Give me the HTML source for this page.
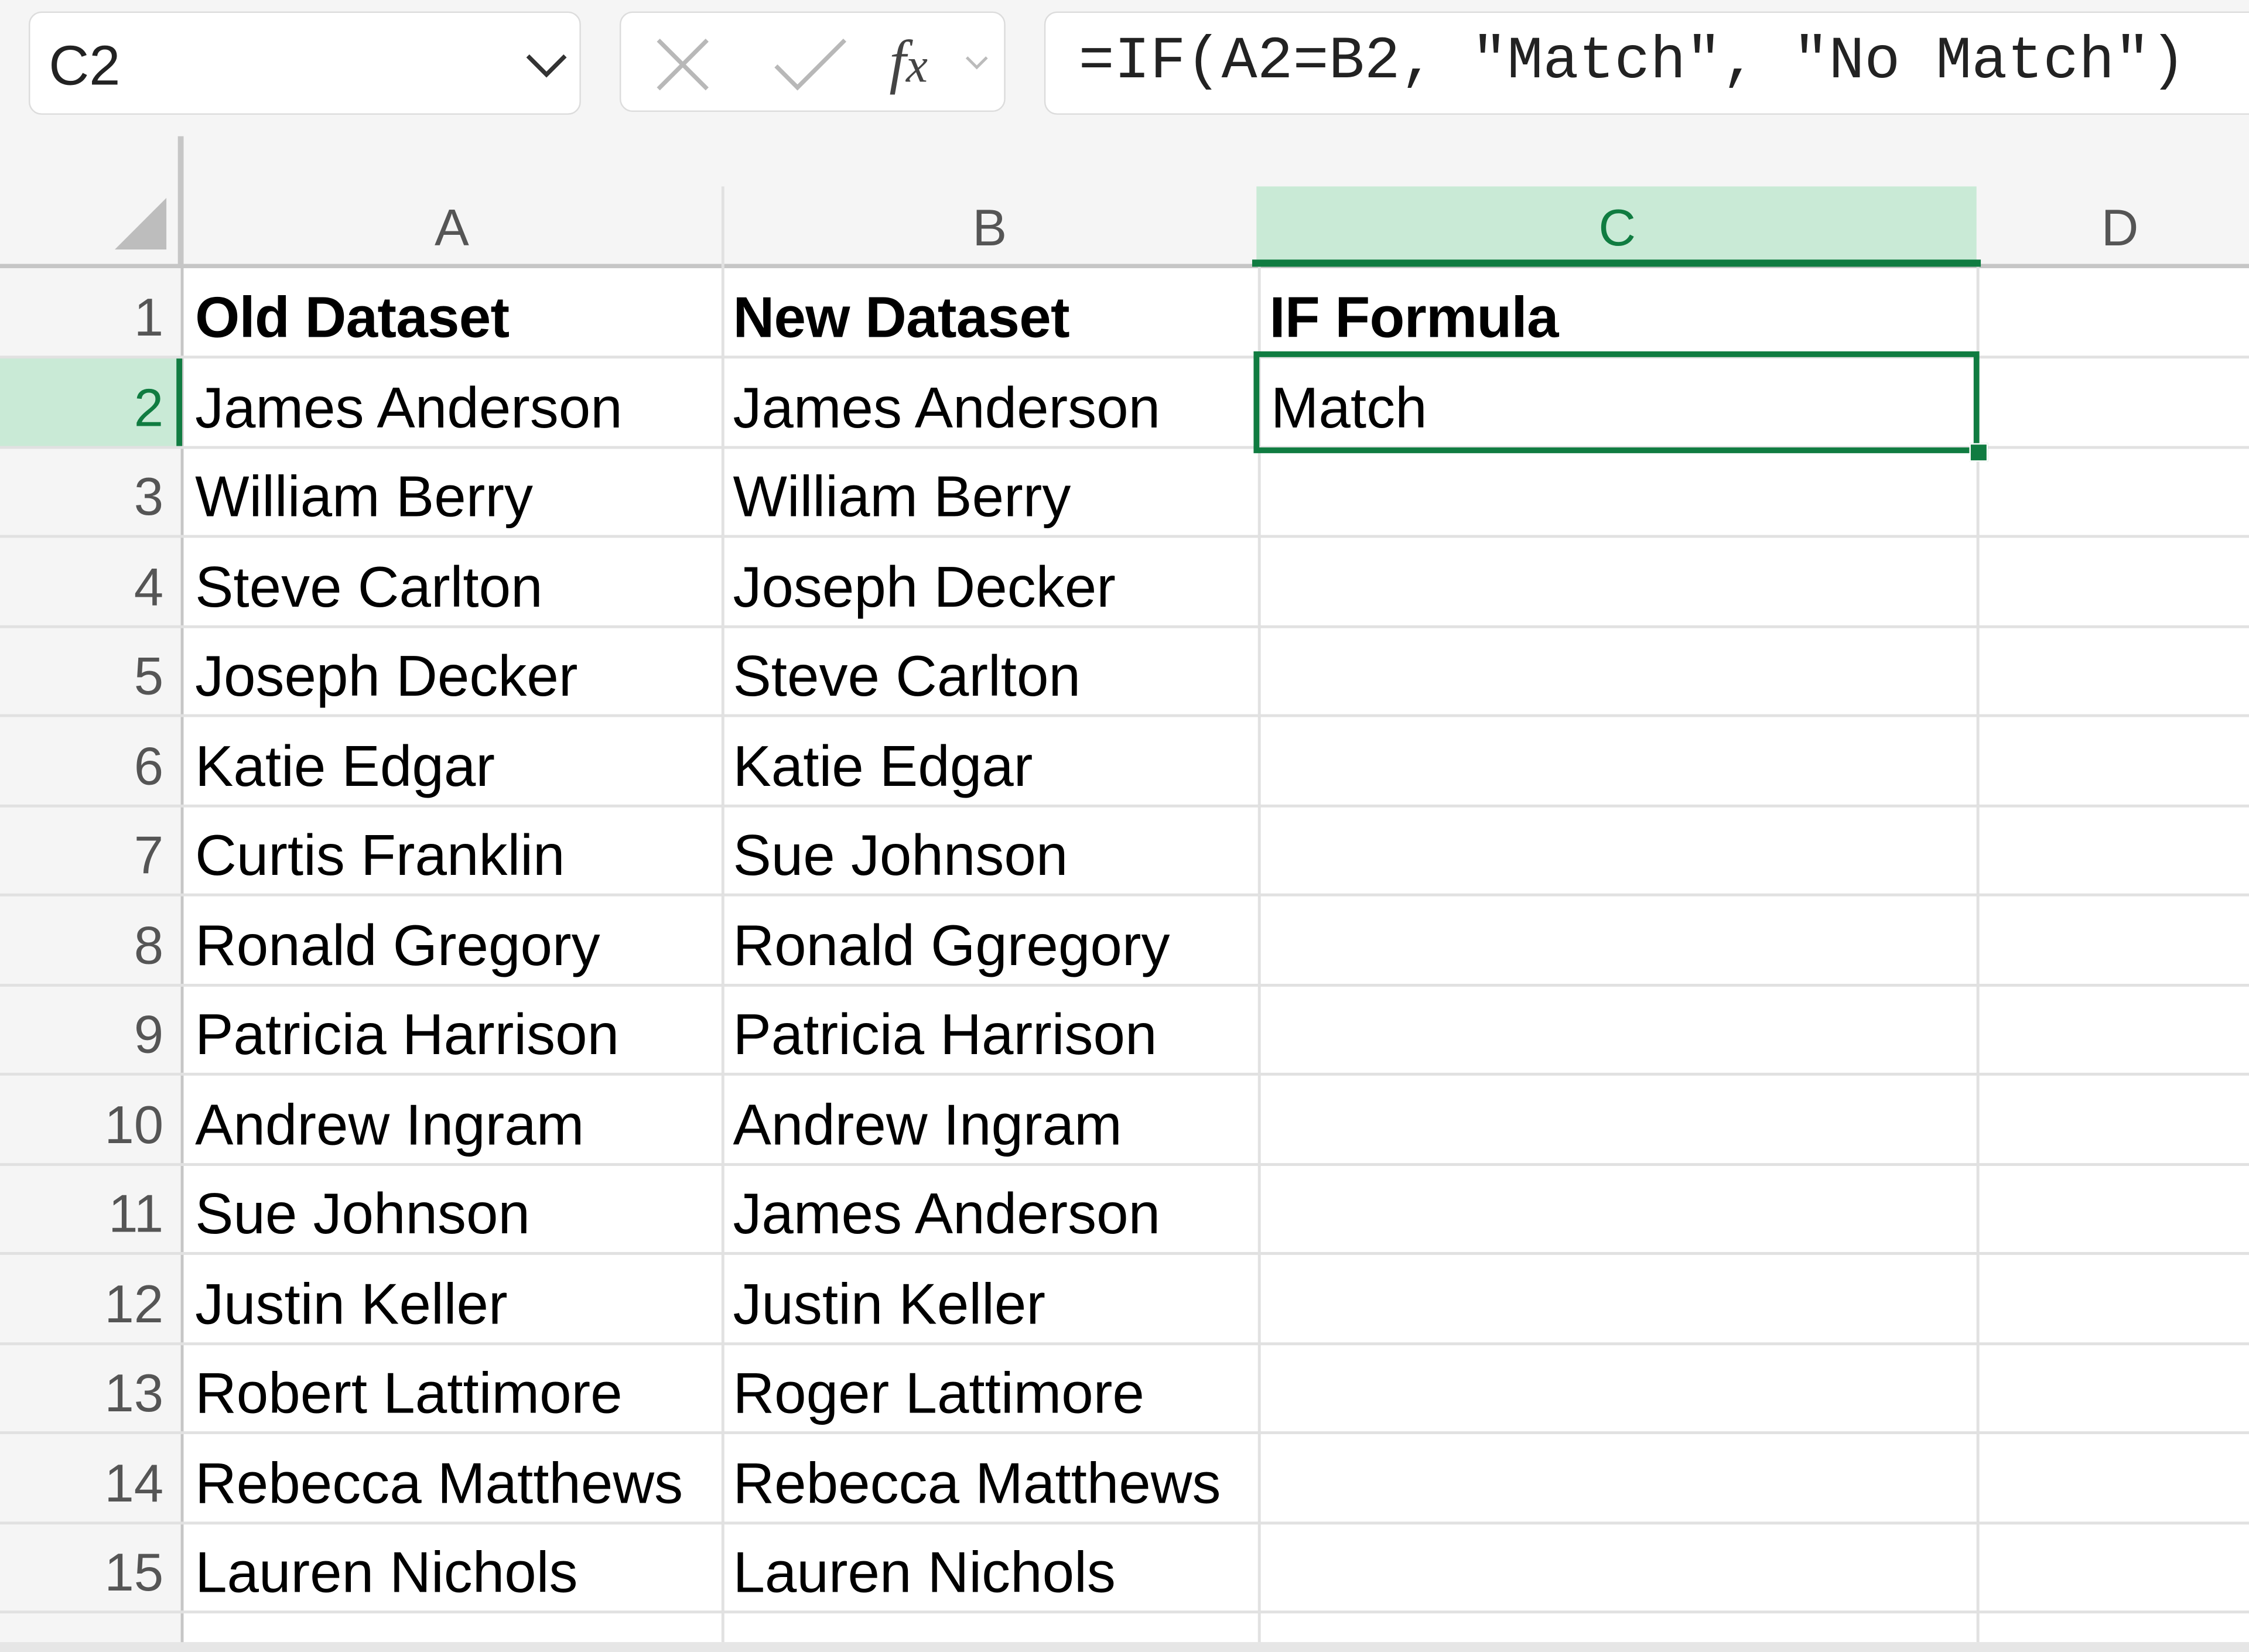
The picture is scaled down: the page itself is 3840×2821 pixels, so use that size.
<!DOCTYPE html>
<html><head><meta charset="utf-8"><style>
html,body{margin:0;padding:0;width:3840px;height:2820px;overflow:hidden;background:#f5f5f5}
#w{position:absolute;left:0;top:0;width:1568px;height:1152px;transform:scale(2.449);transform-origin:0 0;font-family:"Liberation Sans",sans-serif;background:#f5f5f5}
.a{position:absolute}
.box{position:absolute;background:#fff;border:1.5px solid #dcdcdc;border-radius:9px;box-sizing:border-box}
.cell{position:absolute;font-size:40px;color:#000;line-height:62px;white-space:nowrap}
.rn{position:absolute;left:0;width:114px;text-align:right;font-size:37px;color:#555;line-height:62px}
.hl{position:absolute;left:0;width:1568px;height:2px;background:#e1e1e1}
.vl{position:absolute;top:186px;width:1.5px;height:960px;background:#e1e1e1}
.ch{position:absolute;top:130px;height:56px;line-height:58px;text-align:center;font-size:36px;color:#555}
</style></head><body><div id="w">
<div class="box" style="left:20px;top:8px;width:385px;height:72px"></div>
<div class="a" style="left:34px;top:25px;font-size:39px;color:#222">C2</div>
<svg class="a" style="left:365px;top:36px" width="32" height="20"><path d="M3 3 L16 16 L29 3" fill="none" stroke="#333" stroke-width="3"/></svg>
<div class="box" style="left:432px;top:8px;width:269px;height:70px"></div>
<svg class="a" style="left:455px;top:24px" width="44" height="42"><path d="M4 4 L38 38 M38 4 L4 38" stroke="#b8b8b8" stroke-width="3" fill="none"/></svg>
<svg class="a" style="left:538px;top:24px" width="54" height="42"><path d="M3 22 L18 37 L51 4" stroke="#b8b8b8" stroke-width="3" fill="none"/></svg>
<div class="a" style="left:620px;top:20px;font-family:'Liberation Serif',serif;font-style:italic;font-size:42px;color:#444">f<span style="font-size:34px">x</span></div>
<svg class="a" style="left:672px;top:38px" width="18" height="12"><path d="M2 2 L9 9 L16 2" fill="none" stroke="#bbb" stroke-width="2"/></svg>
<div class="box" style="left:728px;top:8px;width:860px;height:72px"></div>
<div class="a" style="left:752px;top:20px;font-family:'Liberation Mono',monospace;font-size:41.5px;color:#222;white-space:pre">=IF(A2=B2, "Match", "No Match")</div>
<div class="a" style="left:127px;top:186px;width:1441px;height:960px;background:#fff"></div>
<div class="a" style="left:876px;top:130px;width:502px;height:56px;background:#c9ead6"></div>
<div class="a" style="left:0;top:184px;width:1568px;height:3px;background:#c6c6c6"></div>
<div class="a" style="left:873px;top:181px;width:508px;height:5px;background:#107c41"></div>
<div class="a" style="left:124px;top:95px;width:4px;height:92px;background:#c6c6c6"></div>
<svg class="a" style="left:80px;top:138px" width="38" height="36"><path d="M36 0 L36 36 L0 36 Z" fill="#bdbdbd"/></svg>
<div class="ch" style="left:127px;width:376px">A</div>
<div class="ch" style="left:503px;width:374px">B</div>
<div class="ch" style="left:877px;width:501px;color:#107c41">C</div>
<div class="ch" style="left:1378px;width:200px">D</div>
<div class="a" style="left:503px;top:130px;width:1.5px;height:56px;background:#e1e1e1"></div>
<div class="vl" style="left:503px"></div><div class="vl" style="left:877px"></div><div class="vl" style="left:1378px"></div>
<div class="a" style="left:126px;top:186px;width:1.5px;height:960px;background:#c6c6c6"></div>
<div class="a" style="left:0;top:249px;width:124px;height:63px;background:#c9ead6"></div>
<div class="a" style="left:123px;top:249px;width:4px;height:63px;background:#107c41"></div>
<div class="hl" style="top:248px"></div><div class="hl" style="top:311px"></div><div class="hl" style="top:373px"></div><div class="hl" style="top:436px"></div><div class="hl" style="top:498px"></div><div class="hl" style="top:561px"></div><div class="hl" style="top:623px"></div><div class="hl" style="top:686px"></div><div class="hl" style="top:748px"></div><div class="hl" style="top:811px"></div><div class="hl" style="top:873px"></div><div class="hl" style="top:936px"></div><div class="hl" style="top:998px"></div><div class="hl" style="top:1061px"></div><div class="hl" style="top:1123px"></div>
<div class="a" style="left:874px;top:245px;width:506px;height:71px;border:4px solid #107c41;box-sizing:border-box"></div>
<div class="a" style="left:1373px;top:309px;width:11px;height:11px;background:#107c41;border:1.5px solid #fff"></div>
<div class="a" style="left:0;top:1145px;width:1568px;height:7px;background:#e6e6e6"></div>
</div>
<div style="position:absolute;left:0;top:0;width:1568px;height:1152px;transform:scale(2.449);transform-origin:0 0;font-family:'Liberation Sans',sans-serif;pointer-events:none">
<div class="rn" style="top:191px">1</div><div class="cell" style="left:136px;top:191px;font-weight:bold;letter-spacing:-0.3px">Old Dataset</div><div class="cell" style="left:511px;top:191px;font-weight:bold;letter-spacing:-0.3px">New Dataset</div><div class="cell" style="left:885px;top:191px;font-weight:bold;letter-spacing:-0.3px">IF Formula</div>
<div class="rn" style="top:254px;color:#107c41">2</div><div class="cell" style="left:136px;top:254px">James Anderson</div><div class="cell" style="left:511px;top:254px">James Anderson</div><div class="cell" style="left:886px;top:254px">Match</div>
<div class="rn" style="top:316px">3</div><div class="cell" style="left:136px;top:316px">William Berry</div><div class="cell" style="left:511px;top:316px">William Berry</div>
<div class="rn" style="top:379px">4</div><div class="cell" style="left:136px;top:379px">Steve Carlton</div><div class="cell" style="left:511px;top:379px">Joseph Decker</div>
<div class="rn" style="top:441px">5</div><div class="cell" style="left:136px;top:441px">Joseph Decker</div><div class="cell" style="left:511px;top:441px">Steve Carlton</div>
<div class="rn" style="top:504px">6</div><div class="cell" style="left:136px;top:504px">Katie Edgar</div><div class="cell" style="left:511px;top:504px">Katie Edgar</div>
<div class="rn" style="top:566px">7</div><div class="cell" style="left:136px;top:566px">Curtis Franklin</div><div class="cell" style="left:511px;top:566px">Sue Johnson</div>
<div class="rn" style="top:629px">8</div><div class="cell" style="left:136px;top:629px">Ronald Gregory</div><div class="cell" style="left:511px;top:629px">Ronald Ggregory</div>
<div class="rn" style="top:691px">9</div><div class="cell" style="left:136px;top:691px">Patricia Harrison</div><div class="cell" style="left:511px;top:691px">Patricia Harrison</div>
<div class="rn" style="top:754px">10</div><div class="cell" style="left:136px;top:754px">Andrew Ingram</div><div class="cell" style="left:511px;top:754px">Andrew Ingram</div>
<div class="rn" style="top:816px">11</div><div class="cell" style="left:136px;top:816px">Sue Johnson</div><div class="cell" style="left:511px;top:816px">James Anderson</div>
<div class="rn" style="top:879px">12</div><div class="cell" style="left:136px;top:879px">Justin Keller</div><div class="cell" style="left:511px;top:879px">Justin Keller</div>
<div class="rn" style="top:941px">13</div><div class="cell" style="left:136px;top:941px">Robert Lattimore</div><div class="cell" style="left:511px;top:941px">Roger Lattimore</div>
<div class="rn" style="top:1004px">14</div><div class="cell" style="left:136px;top:1004px">Rebecca Matthews</div><div class="cell" style="left:511px;top:1004px">Rebecca Matthews</div>
<div class="rn" style="top:1066px">15</div><div class="cell" style="left:136px;top:1066px">Lauren Nichols</div><div class="cell" style="left:511px;top:1066px">Lauren Nichols</div>
</div>
</body></html>
